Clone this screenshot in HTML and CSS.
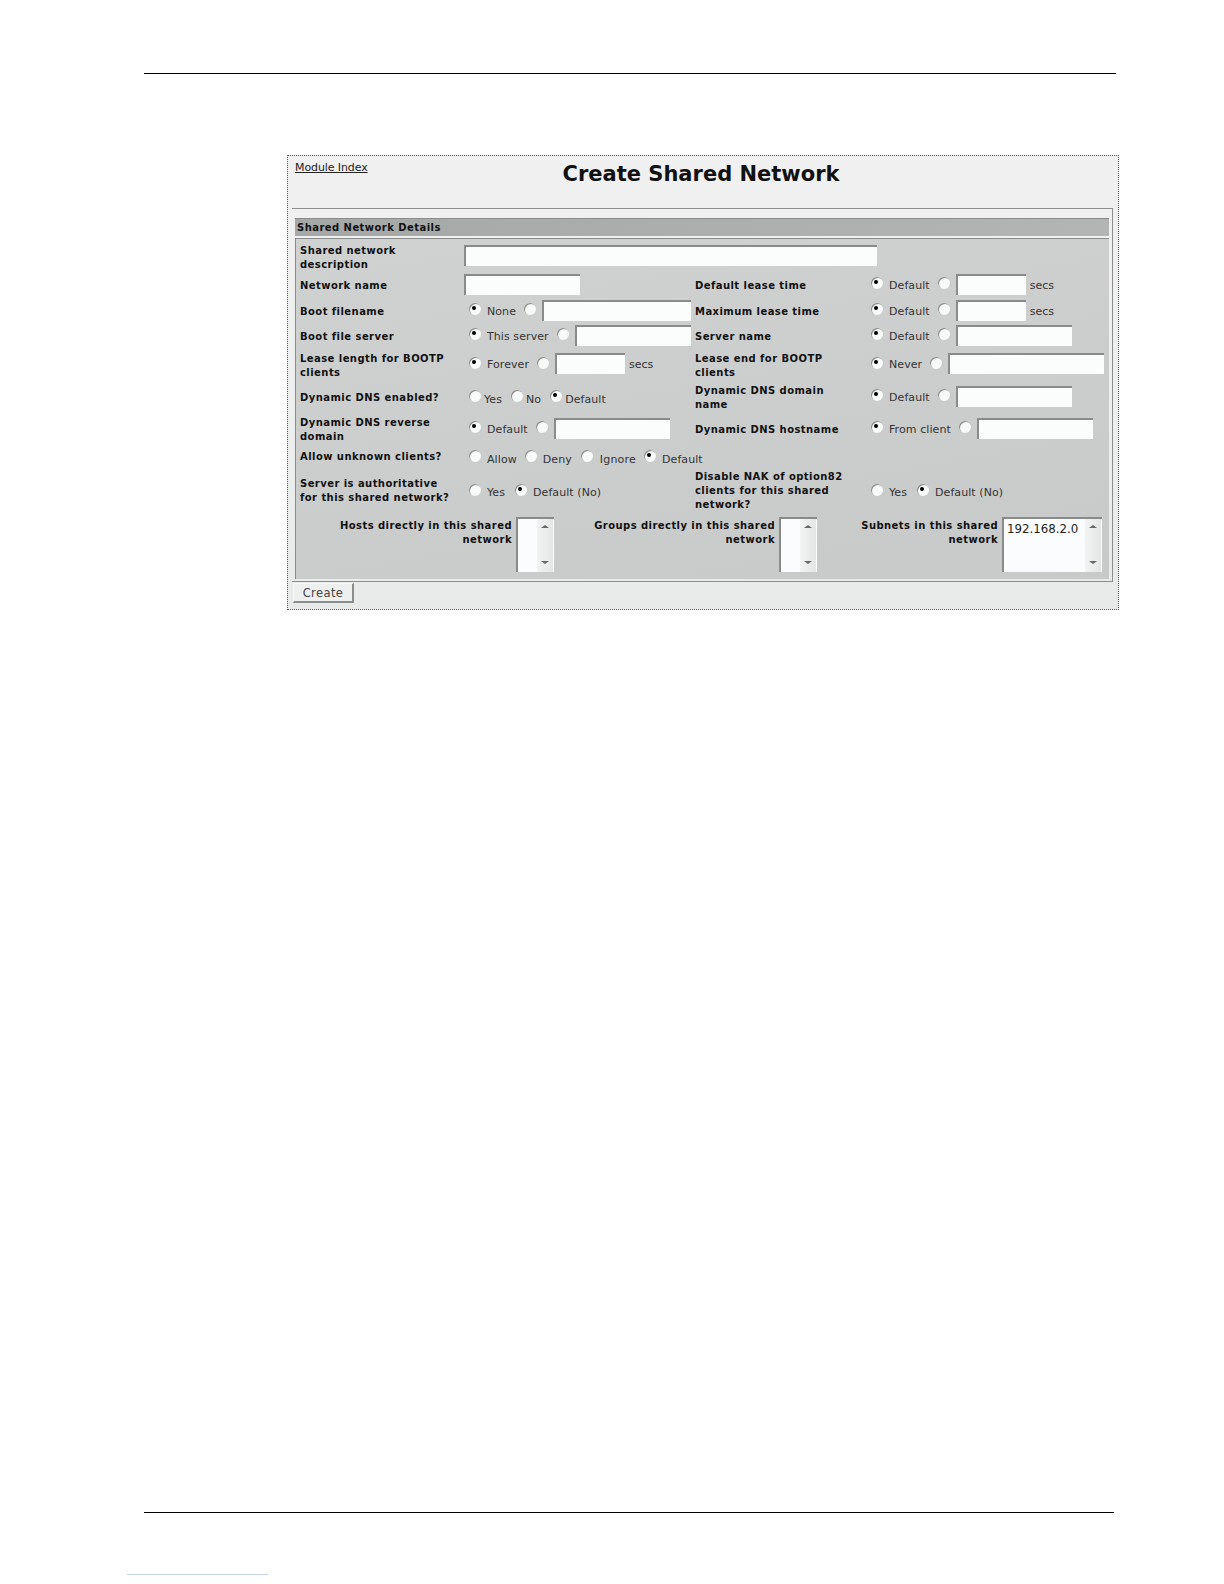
FILE: index.html
```html
<!DOCTYPE html>
<html lang="en">
<head>
<meta charset="utf-8">
<title>Create Shared Network</title>
<link rel="stylesheet" href="styles.css">
</head>
<body>
<div class="rule rule-top"></div>
<div class="panel">
  <header class="head">
    <a class="index" href="#">Module Index</a>
    <h1>Create Shared Network</h1>
  </header>
  <div class="outer">
    <div class="bar">Shared Network Details</div>
    <div class="section">
      <div class="grid">
        <div class="lab drop">Shared network<br>description</div>
        <div class="val wide"><input class="w-desc" type="text"></div>

        <div class="lab">Network name</div>
        <div class="val"><input class="w-name" type="text"></div>
        <div class="lab">Default lease time</div>
        <div class="val r"><span class="radio on"></span><span class="opt">Default</span><span class="radio"></span><input class="w-s" type="text"><span class="unit">secs</span></div>

        <div class="lab">Boot filename</div>
        <div class="val l"><span class="radio on"></span><span class="opt">None</span><span class="radio"></span><input class="w-boot" type="text"></div>
        <div class="lab">Maximum lease time</div>
        <div class="val r"><span class="radio on"></span><span class="opt">Default</span><span class="radio"></span><input class="w-s" type="text"><span class="unit">secs</span></div>

        <div class="lab">Boot file server</div>
        <div class="val l"><span class="radio on"></span><span class="opt">This server</span><span class="radio"></span><input class="w-m" type="text"></div>
        <div class="lab">Server name</div>
        <div class="val r"><span class="radio on"></span><span class="opt">Default</span><span class="radio"></span><input class="w-m" type="text"></div>

        <div class="lab">Lease length for BOOTP<br>clients</div>
        <div class="val l"><span class="radio on"></span><span class="opt">Forever</span><span class="radio"></span><input class="w-s" type="text"><span class="unit">secs</span></div>
        <div class="lab">Lease end for BOOTP<br>clients</div>
        <div class="val r"><span class="radio on"></span><span class="opt">Never</span><span class="radio"></span><input class="w-l" type="text"></div>

        <div class="lab">Dynamic DNS enabled?</div>
        <div class="val l low"><span class="radio"></span><span class="opt tight">Yes</span><span class="radio"></span><span class="opt tight">No</span><span class="radio on"></span><span class="opt tight">Default</span></div>
        <div class="lab">Dynamic DNS domain<br>name</div>
        <div class="val r"><span class="radio on"></span><span class="opt">Default</span><span class="radio"></span><input class="w-m" type="text"></div>

        <div class="lab">Dynamic DNS reverse<br>domain</div>
        <div class="val l"><span class="radio on"></span><span class="opt">Default</span><span class="radio"></span><input class="w-m" type="text"></div>
        <div class="lab">Dynamic DNS hostname</div>
        <div class="val r"><span class="radio on"></span><span class="opt">From client</span><span class="radio"></span><input class="w-m" type="text"></div>

        <div class="lab lift">Allow unknown clients?</div>
        <div class="val l wide low"><span class="radio"></span><span class="opt">Allow</span><span class="radio"></span><span class="opt deny">Deny</span><span class="radio"></span><span class="opt ignore">Ignore</span><span class="radio on"></span><span class="opt">Default</span></div>

        <div class="lab lift">Server is authoritative<br>for this shared network?</div>
        <div class="val l low"><span class="radio"></span><span class="opt yes">Yes</span><span class="radio on"></span><span class="opt">Default (No)</span></div>
        <div class="lab lift">Disable NAK of option82<br>clients for this shared<br>network?</div>
        <div class="val r low"><span class="radio"></span><span class="opt yes">Yes</span><span class="radio on"></span><span class="opt">Default (No)</span></div>
      </div>
      <div class="lists">
        <div class="item i1">
          <div class="lab right">Hosts directly in this shared<br>network</div>
          <div class="list l-s"><div class="list-body"></div><div class="scroll"><i class="up"></i><i class="down"></i></div></div>
        </div>
        <div class="item i2">
          <div class="lab right">Groups directly in this shared<br>network</div>
          <div class="list l-s"><div class="list-body"></div><div class="scroll"><i class="up"></i><i class="down"></i></div></div>
        </div>
        <div class="item i3">
          <div class="lab right">Subnets in this shared<br>network</div>
          <div class="list l-w"><div class="list-body">192.168.2.0</div><div class="scroll"><i class="up"></i><i class="down"></i></div></div>
        </div>
      </div>
    </div>
  </div>
  <button class="create" type="button">Create</button>
</div>
<div class="rule rule-bottom"></div>
<div class="link-line"></div>
</body>
</html>
```
FILE: styles.css
```css
* { box-sizing: border-box; }
html, body { margin: 0; padding: 0; background: #fff; }
body {
  width: 1224px;
  height: 1584px;
  overflow: hidden;
  font-family: "DejaVu Sans", sans-serif;
  font-size: 11px;
  color: #222;
}
.rule { height: 1px; background: #000; }
.rule-top { width: 972px; margin: 73px 0 0 144px; }
.rule-bottom { width: 970px; margin: 902px 0 0 144px; }
.link-line { width: 141px; height: 1px; margin: 61px 0 0 127px; background: #c3d2f0; }

.panel {
  width: 832px;
  height: 455px;
  margin: 81px 0 0 287px;
  padding: 0 5px 0 4px;
  border: 1px dotted #555;
  background: linear-gradient(180deg, #f0f0f0 0%, #eeefef 50%, #e8eaea 100%);
}
.head { position: relative; height: 52px; }
.index {
  position: absolute;
  left: 3px;
  top: 5px;
  font-size: 11px;
  line-height: 13px;
  letter-spacing: -.1px;
  color: #222;
}
h1 {
  margin: 0;
  padding: 5px 3px 0 0;
  text-align: center;
  font-size: 21px;
  line-height: 27px;
  font-weight: 700;
  color: #111;
}
.outer {
  height: 374px;
  padding: 9px 3px 3px 3px;
  border-top: 1px solid #8c8e8e;
  border-right: 1px solid #8c8e8e;
  border-bottom: 1px solid #8c8e8e;
}
.bar {
  height: 18px;
  padding-left: 2px;
  border-top: 1px solid #8a8c8c;
  background: linear-gradient(90deg, #a6a8a8, #b3b5b5);
  font-weight: 700;
  font-size: 10px;
  line-height: 17px;
  letter-spacing: .45px;
  color: #111;
}
.section {
  height: 341px;
  margin-top: 2px;
  padding: 3px 0 0 4px;
  border-top: 1px solid #8a8c8c;
  border-left: 1px solid #8a8c8c;
  background: linear-gradient(170deg, #d0d2d2, #cbcdcd 60%, #c8caca);
}
.grid {
  display: grid;
  grid-template-columns: 164px 231px 176px 1fr;
  grid-template-rows: 30px 28px 24px 26px 31px 34px 30px 26px 41px;
  align-items: center;
}
.lab {
  font-weight: 700;
  font-size: 10px;
  line-height: 14px;
  letter-spacing: .44px;
  color: #111;
}
.drop { margin-top: 2px; }
.lift { margin-bottom: 2px; }
.right { text-align: right; }
.val { display: flex; align-items: center; margin-bottom: 2px; white-space: nowrap; }
.wide { grid-column: span 3; }
.l { padding-left: 5px; }
.low { margin-top: 4px; }
.low .radio { margin-bottom: 6px; }
.opt { margin: 0 8px 0 6px; color: #333; letter-spacing: .08px; }
.opt.tight { margin: 0 9px 0 3px; }
.opt.deny { margin-right: 9px; }
.opt.ignore { margin: 0 8px 0 7px; letter-spacing: .2px; }
.opt.yes { margin-right: 10px; }
.unit { margin-left: 4px; color: #333; }
.radio {
  position: relative;
  flex: none;
  width: 12px;
  height: 12px;
  margin-bottom: 4px;
  border-radius: 50%;
  background: #f8f9f9;
  box-shadow: inset 1px 1px 0 #8a8a8a;
  filter: blur(.35px);
}
.radio.on::after {
  content: "";
  position: absolute;
  left: 3px;
  top: 3px;
  width: 4px;
  height: 4px;
  border-radius: 50%;
  background: #000;
}
input {
  flex: none;
  height: 21px;
  margin: 0 0 2px 6px;
  padding: 0;
  border: 0;
  border-top: 2px solid #8a8a8a;
  border-left: 2px solid #8a8a8a;
  border-radius: 0;
  background: #fbfcfc;
}
.grid > .val:not(.l):not(.r) > input { margin-left: 0; }
.w-desc { width: 413px; }
.w-name { width: 116px; }
.w-boot { width: 149px; }
.w-s { width: 70px; }
.w-m { width: 116px; }
.w-l { width: 156px; }

.lists { display: flex; margin: 5px 0 0 -1px; height: 55px; }
.item { display: flex; justify-content: flex-end; gap: 4px; }
.i1 { width: 255px; }
.i2 { width: 263px; }
.i3 { width: 285px; }
.item .lab { padding-top: 2px; }
.list {
  display: flex;
  flex: none;
  height: 55px;
  border-top: 2px solid #8a8a8a;
  border-left: 2px solid #8a8a8a;
  background: #fbfcfd;
}
.l-s { width: 38px; }
.l-w { width: 100px; }
.list-body {
  flex: 1;
  padding: 3px 0 0 3px;
  font-size: 11.8px;
  line-height: 14px;
  color: #222;
}
.scroll {
  position: relative;
  width: 16px;
  margin-right: 1px;
  background: linear-gradient(90deg, #f2f3f3, #e4e6e6);
}
.up, .down {
  position: absolute;
  left: 4px;
  width: 0;
  height: 0;
  border-left: 4px solid transparent;
  border-right: 4px solid transparent;
}
.up { top: 6px; border-bottom: 3px solid #666; }
.down { bottom: 8px; border-top: 3px solid #666; }
.create {
  display: block;
  width: 61px;
  height: 20px;
  margin: 1px 0 0 1px;
  padding: 0;
  border: 0;
  border-top: 1px solid #f8f8f8;
  border-left: 1px solid #f8f8f8;
  border-right: 2px solid #8a8c8c;
  border-bottom: 2px solid #8a8c8c;
  background: #eeefef;
  font-family: "DejaVu Sans", sans-serif;
  font-size: 11.5px;
  color: #444;
  letter-spacing: .4px;
}
```
